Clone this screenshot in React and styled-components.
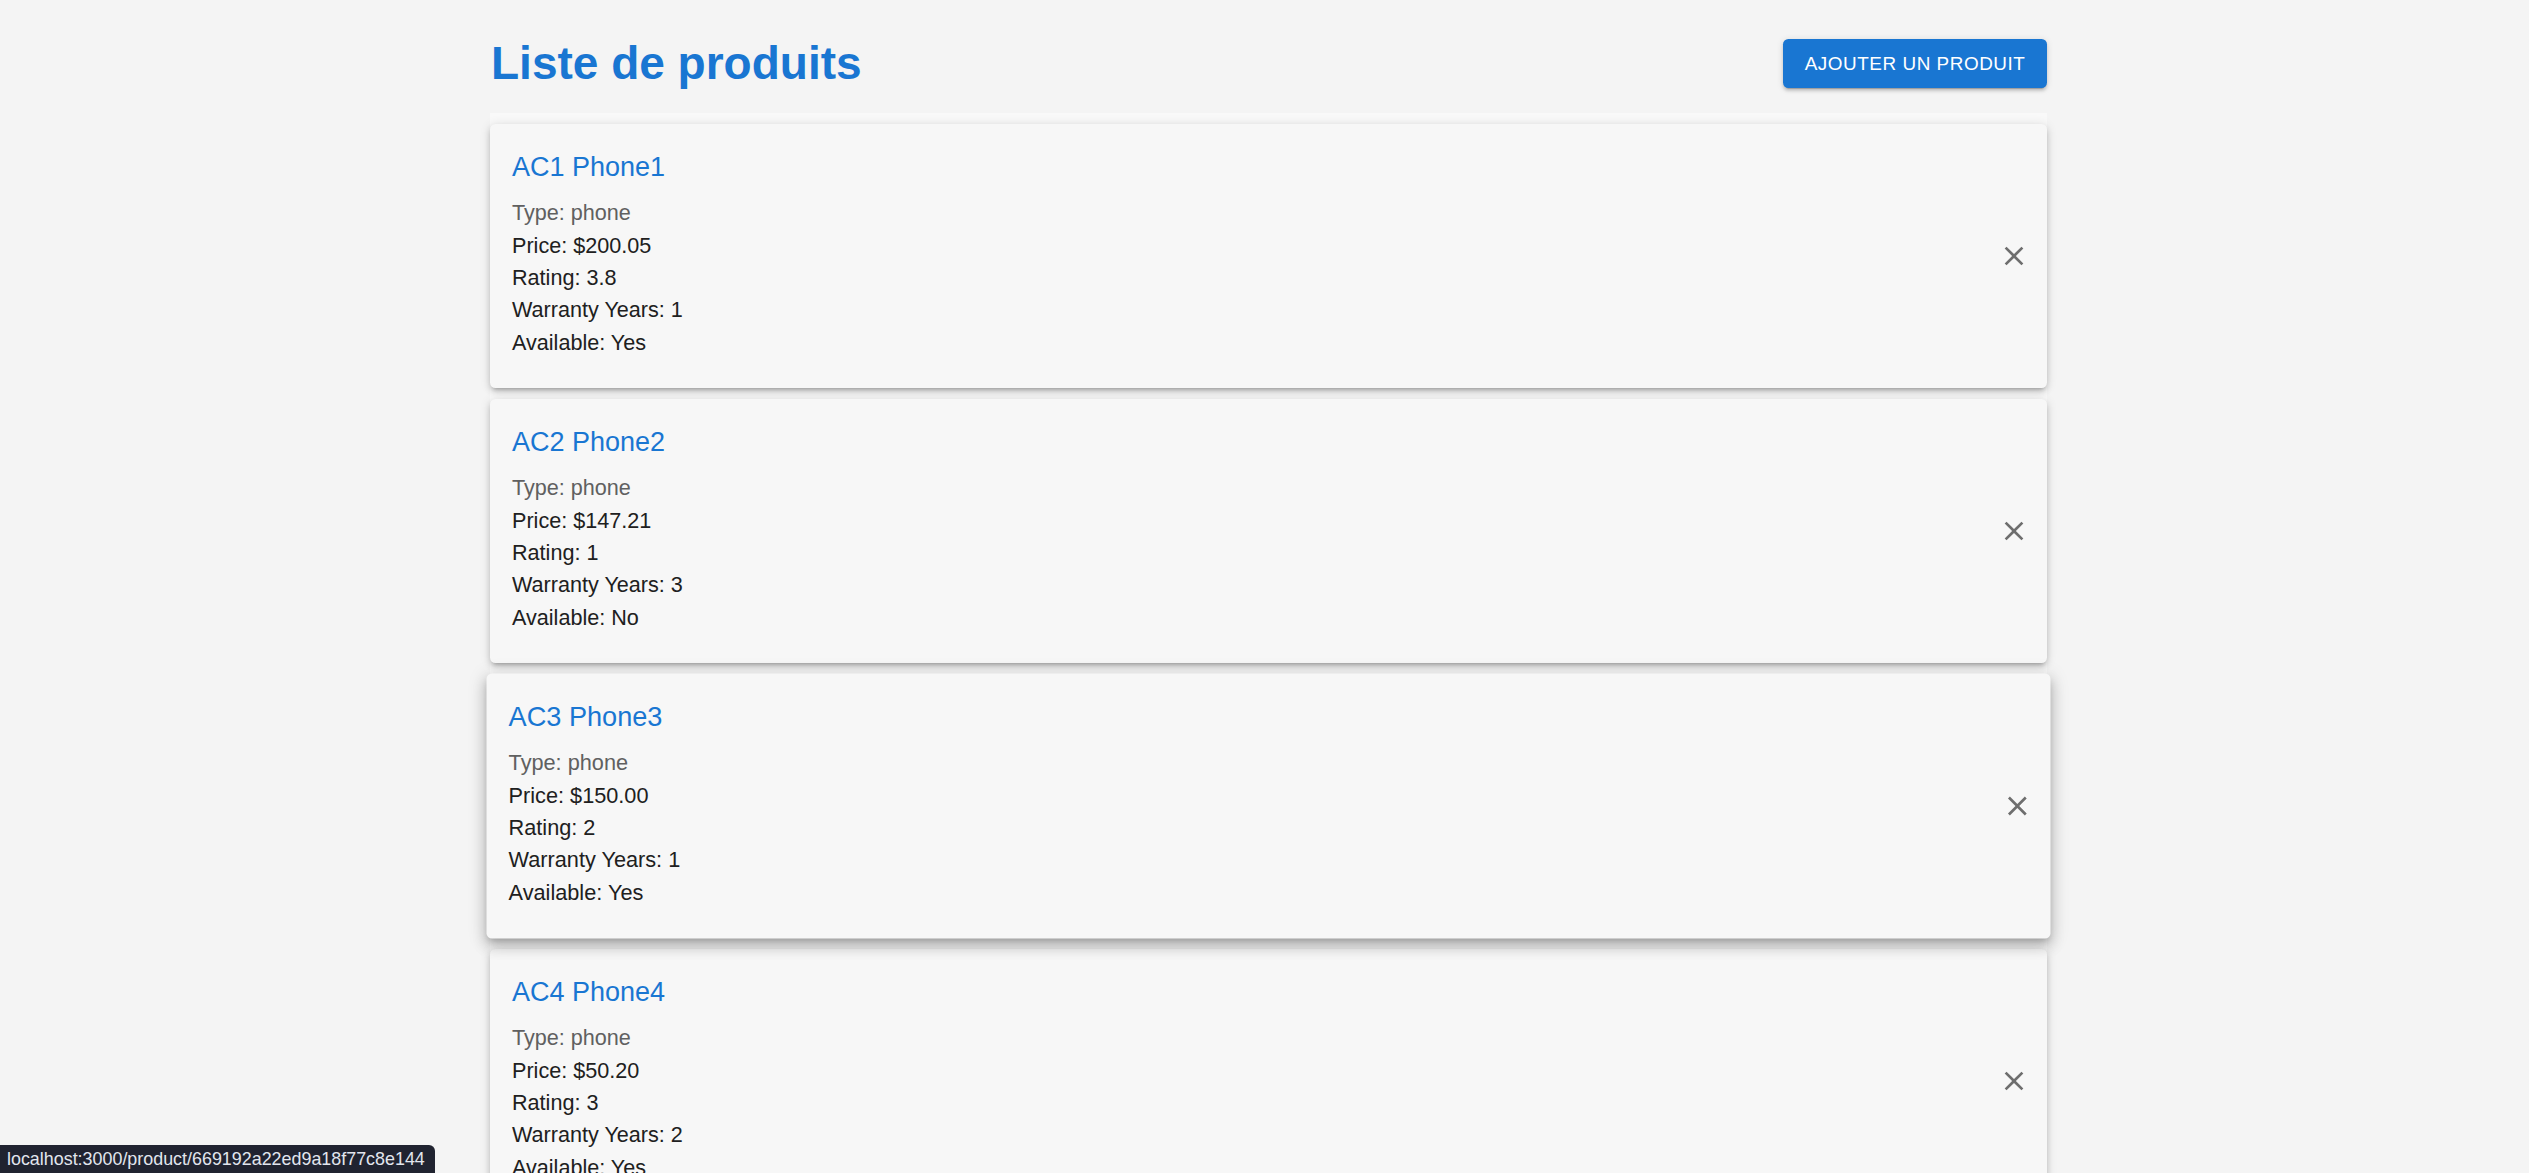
import React from 'react'
import styled, { createGlobalStyle } from 'styled-components'

const GlobalStyle = createGlobalStyle`
    body {
        margin: 0;
        background: #f4f4f4;
        font-family: "Liberation Sans", Arial, sans-serif;
    }
`

const Page = styled.div`
    min-height: 100vh;
    padding-left: 8px;
    box-sizing: border-box;
`

const Container = styled.div`
    width: 1557px;
    margin: 0 auto;
`

const Header = styled.div`
    display: flex;
    justify-content: space-between;
    align-items: center;
    height: 49px;
    padding-top: 39px;
`

const Title = styled.h1`
    margin: 0 0 0 1px;
    font-size: 46px;
    font-weight: 700;
    line-height: 56.7px;
    color: #1976d2;
`

const AddButton = styled.button`
    height: 49px;
    padding: 0 21.6px;
    border: none;
    border-radius: 5.4px;
    background: #1976d2;
    color: #ffffff;
    font-family: "Liberation Sans", Arial, sans-serif;
    font-size: 18.9px;
    font-weight: 500;
    letter-spacing: 0.54px;
    text-transform: uppercase;
    box-shadow: 0 4px 1px -3px rgba(0,0,0,0.2), 0 3px 3px 0 rgba(0,0,0,0.14), 0 1px 7px 0 rgba(0,0,0,0.12);
    cursor: pointer;
`

const List = styled.div`
    margin-top: 25px;
    padding-top: 11px;
    background: #f9f9f9;
`

const Card = styled.div`
    display: flex;
    align-items: center;
    height: 264px;
    box-sizing: border-box;
    margin-bottom: 11px;
    padding: 0 17px 0 22px;
    background: #f7f7f7;
    border-radius: 5.4px;
    box-shadow: ${p => p.$hovered
        ? '0 5px 7px -3px rgba(0,0,0,0.22), 0 8px 14px 1px rgba(0,0,0,0.14), 0 3px 18px 2px rgba(0,0,0,0.12)'
        : '0 4px 4px -3px rgba(0,0,0,0.25), 0 4px 6px 0 rgba(0,0,0,0.14), 0 1px 11px 0 rgba(0,0,0,0.12)'};
    transform: ${p => p.$hovered ? 'scale(1.0045)' : 'none'};
`

const CardBody = styled.div`
    flex: 1;
    align-self: stretch;
    padding-top: 22px;
`

const Name = styled.div`
    font-size: 27px;
    line-height: 43.2px;
    color: #1976d2;
    margin-bottom: 8px;
`

const Line = styled.div`
    font-size: 21.6px;
    line-height: 32.4px;
    color: ${p => p.$muted ? '#606060' : '#202020'};
`

const CloseButton = styled.button`
    display: flex;
    align-items: center;
    justify-content: center;
    width: 32px;
    height: 32px;
    padding: 0;
    border: none;
    background: transparent;
    color: #6e6e6e;
    cursor: pointer;
`

const StatusBar = styled.div`
    position: fixed;
    left: 0;
    bottom: 0;
    height: 28px;
    padding: 0 10px 0 7px;
    display: flex;
    align-items: center;
    background: #202330;
    border-top-right-radius: 6px;
    color: #e2e6ee;
    font-family: "Liberation Sans", Arial, sans-serif;
    font-size: 17.9px;
`

const products = [
    { code: 'AC1', name: 'Phone1', type: 'phone', price: '200.05', rating: '3.8', warranty: 1, available: true },
    { code: 'AC2', name: 'Phone2', type: 'phone', price: '147.21', rating: '1', warranty: 3, available: false },
    { code: 'AC3', name: 'Phone3', type: 'phone', price: '150.00', rating: '2', warranty: 1, available: true },
    { code: 'AC4', name: 'Phone4', type: 'phone', price: '50.20', rating: '3', warranty: 2, available: true },
]

const CloseIcon = () => (
    <svg width="32" height="32" viewBox="0 0 24 24" fill="currentColor">
        <path d="M19 6.41 17.59 5 12 10.59 6.41 5 5 6.41 10.59 12 5 17.59 6.41 19 12 13.41 17.59 19 19 17.59 13.41 12z" />
    </svg>
)

const App = () => {
    return (
        <>
            <GlobalStyle />
            <Page>
                <Container>
                    <Header>
                        <Title>Liste de produits</Title>
                        <AddButton>Ajouter un produit</AddButton>
                    </Header>
                    <List>
                        {products.map((p, i) => (
                            <Card key={p.code} $hovered={i === 2}>
                                <CardBody>
                                    <Name>{p.code} {p.name}</Name>
                                    <Line $muted>Type: {p.type}</Line>
                                    <Line>Price: ${p.price}</Line>
                                    <Line>Rating: {p.rating}</Line>
                                    <Line>Warranty Years: {p.warranty}</Line>
                                    <Line>Available: {p.available ? 'Yes' : 'No'}</Line>
                                </CardBody>
                                <CloseButton><CloseIcon /></CloseButton>
                            </Card>
                        ))}
                    </List>
                </Container>
            </Page>
            <StatusBar>localhost:3000/product/669192a22ed9a18f77c8e144</StatusBar>
        </>
    )
}

export default App
